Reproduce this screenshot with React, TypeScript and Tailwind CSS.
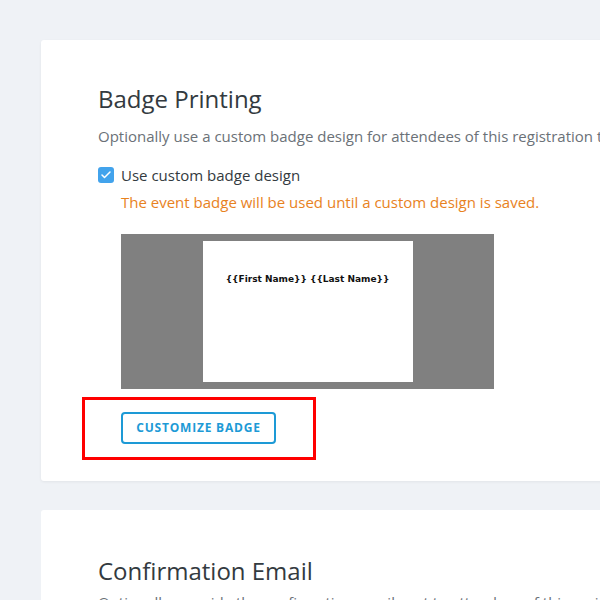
import { Check } from "lucide-react";

const font = { fontFamily: "'Open Sans', 'Noto Sans', sans-serif" };

export default function App() {
  return (
    <div className="min-h-[600px] w-[600px] overflow-hidden bg-[#eff2f6]" style={font}>
      <div className="pl-[41px] pt-[40px]">
        <div className="w-[700px] rounded-[3px] bg-white pl-[57px] pt-[44px] pb-[21px] shadow-[0_1px_3px_rgba(0,0,0,0.06)]">
          <h2 className="text-[24px] font-medium leading-[30px] text-[#333a40]">Badge Printing</h2>
          <p className="mt-[12px] whitespace-nowrap text-[15px] leading-[20px] text-[#6b7177]">
            Optionally use a custom badge design for attendees of this registration type.
          </p>
          <label className="mt-[19px] flex items-center gap-[7px]">
            <span className="flex h-[16px] w-[16px] items-center justify-center rounded-[3px] bg-[#42a3ec]">
              <Check className="h-[12px] w-[12px] text-white" strokeWidth={3} />
            </span>
            <span className="text-[15px] leading-[20px] text-[#333a40]">Use custom badge design</span>
          </label>
          <p className="ml-[23px] mt-[7px] text-[15px] leading-[20px] text-[#e8821e]">
            The event badge will be used until a custom design is saved.
          </p>
          <div className="ml-[23px] mt-[22px] flex h-[155px] w-[373px] items-center justify-center bg-[#808080]">
            <div className="flex h-[141px] w-[210px] justify-center bg-white pt-[31px]">
              <span
                className="text-[9px] font-bold leading-[14px] text-[#111]"
                style={{ fontFamily: "'DejaVu Sans', Verdana, sans-serif" }}
              >
                {"{{First Name}} {{Last Name}}"}
              </span>
            </div>
          </div>
          <div className="-ml-[16px] mt-[8px] w-[234px] border-[3px] border-[#ff0000] pl-[36px] pt-[12px] pb-[13px]">
            <button
              type="button"
              className="h-[32px] w-[155px] rounded-[4px] border-2 border-[#1d9ad6] text-[12px] font-bold tracking-[0.8px] text-[#1d9ad6]"
            >
              CUSTOMIZE BADGE
            </button>
          </div>
        </div>
        <div className="mt-[29px] w-[700px] rounded-[3px] bg-white pl-[57px] pt-[46px] pb-[40px]">
          <h2 className="text-[24px] font-medium leading-[30px] text-[#333a40]">Confirmation Email</h2>
          <p className="mt-[6px] whitespace-nowrap text-[15px] leading-[20px] text-[#6b7177]">
            Optionally override the confirmation email sent to attendees of this registration type.
          </p>
        </div>
      </div>
    </div>
  );
}
